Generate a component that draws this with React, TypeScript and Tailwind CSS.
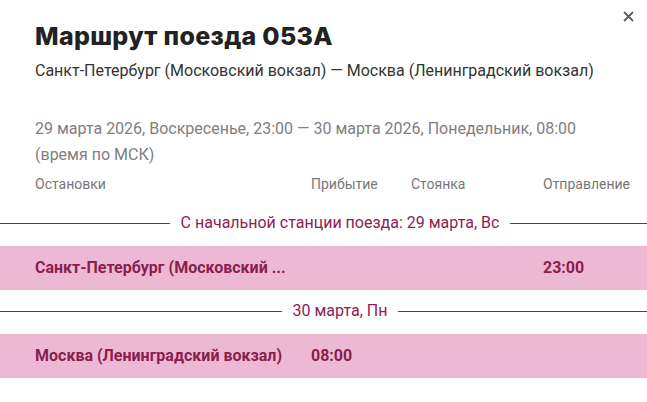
import React from "react";

function Separator({ text }: { text: string }) {
  return (
    <div className="flex w-[680px] items-center gap-[11px]">
      <div className="h-px flex-1 bg-[#8b2252]" />
      <span className="text-[16px] leading-[24px] text-[#8b2252]">{text}</span>
      <div className="h-px flex-1 bg-[#8b2252]" />
    </div>
  );
}

function Row({ name, arr, stop, dep }: { name: string; arr: string; stop: string; dep: string }) {
  return (
    <div className="grid h-[44px] grid-cols-[276px_100px_132px_1fr] items-center bg-[#edb8d3] pl-[35px] text-[16px] font-bold text-[#8b1d4f]">
      <span className="whitespace-nowrap">{name}</span>
      <span>{arr}</span>
      <span>{stop}</span>
      <span>{dep}</span>
    </div>
  );
}

export default function App() {
  return (
    <div
      className="relative h-[402px] w-[647px] overflow-hidden bg-white"
      style={{ fontFamily: "Roboto, 'Liberation Sans', sans-serif" }}
    >
      <button className="absolute right-[13px] top-[10px] flex h-[12px] w-[12px] items-center justify-center text-[#5f5f5f]">
        <svg width="11" height="11" viewBox="0 0 11 11">
          <path d="M1 1L10 10M10 1L1 10" stroke="currentColor" strokeWidth="1.8" />
        </svg>
      </button>
      <div className="px-[35px] pt-[20px]">
        <h1
          className="text-[25px] font-extrabold leading-[32px] tracking-[0.3px] text-[#222]"
          style={{ fontFamily: "Inter, 'Noto Sans', sans-serif" }}
        >
          Маршрут поезда 053А
        </h1>
        <p className="mt-[7px] text-[16px] leading-[24px] text-[#333]">
          Санкт-Петербург (Московский вокзал) — Москва (Ленинградский вокзал)
        </p>
        <p className="mt-[33px] text-[16px] leading-[26px] text-[#808080]">
          29 марта 2026, Воскресенье, 23:00 — 30 марта 2026, Понедельник, 08:00
          <br />
          (время по МСК)
        </p>
      </div>
      <div className="mt-[6px] grid grid-cols-[276px_100px_132px_1fr] pl-[35px] text-[14px] leading-[20px] text-[#777]">
        <span>Остановки</span>
        <span>Прибытие</span>
        <span>Стоянка</span>
        <span>Отправление</span>
      </div>
      <div className="mt-[17px]">
        <Separator text="С начальной станции поезда: 29 марта, Вс" />
      </div>
      <div className="mt-[11px]">
        <Row name="Санкт-Петербург (Московский ..." arr="" stop="" dep="23:00" />
      </div>
      <div className="mt-[9px]">
        <Separator text="30 марта, Пн" />
      </div>
      <div className="mt-[11px]">
        <Row name="Москва (Ленинградский вокзал)" arr="08:00" stop="" dep="" />
      </div>
    </div>
  );
}
